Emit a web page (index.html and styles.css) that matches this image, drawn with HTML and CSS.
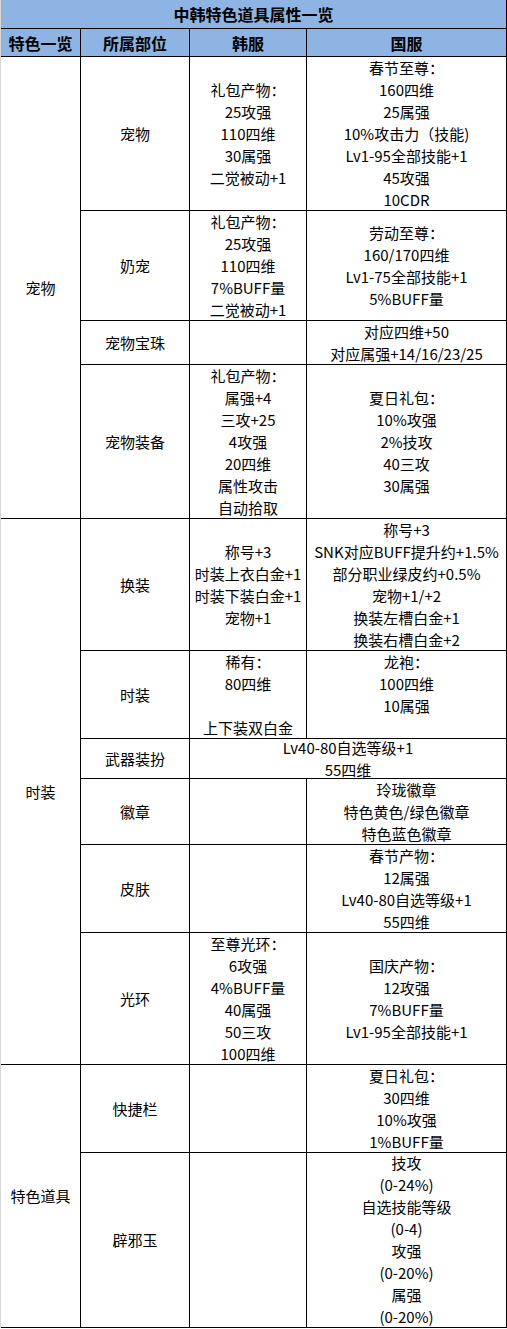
FILE: index.html
```html
<!DOCTYPE html>
<html lang="zh-CN">
<head>
<meta charset="utf-8">
<title>中韩特色道具属性一览</title>
<link rel="stylesheet" href="styles.css">
</head>
<body>
<div class="sheet">
  <div class="c title">中韩特色道具属性一览</div>
  <div class="c head">特色一览</div>
  <div class="c head">所属部位</div>
  <div class="c head">韩服</div>
  <div class="c head">国服</div>

  <div class="c grp span4">宠物</div>
  <div class="c">宠物</div>
  <div class="c">礼包产物：<br>25攻强<br>110四维<br>30属强<br>二觉被动+1</div>
  <div class="c">春节至尊：<br>160四维<br>25属强<br>10%攻击力（技能)<br>Lv1-95全部技能+1<br>45攻强<br>10CDR</div>

  <div class="c">奶宠</div>
  <div class="c">礼包产物：<br>25攻强<br>110四维<br>7%BUFF量<br>二觉被动+1</div>
  <div class="c">劳动至尊：<br>160/170四维<br>Lv1-75全部技能+1<br>5%BUFF量</div>

  <div class="c">宠物宝珠</div>
  <div class="c"></div>
  <div class="c">对应四维+50<br>对应属强+14/16/23/25</div>

  <div class="c">宠物装备</div>
  <div class="c">礼包产物：<br>属强+4<br>三攻+25<br>4攻强<br>20四维<br>属性攻击<br>自动拾取</div>
  <div class="c">夏日礼包：<br>10%攻强<br>2%技攻<br>40三攻<br>30属强</div>

  <div class="c grp span6">时装</div>
  <div class="c">换装</div>
  <div class="c">称号+3<br>时装上衣白金+1<br>时装下装白金+1<br>宠物+1</div>
  <div class="c">称号+3<br>SNK对应BUFF提升约+1.5%<br>部分职业绿皮约+0.5%<br>宠物+1/+2<br>换装左槽白金+1<br>换装右槽白金+2</div>

  <div class="c">时装</div>
  <div class="c">稀有：<br>80四维<br><br>上下装双白金</div>
  <div class="c">龙袍：<br>100四维<br>10属强<br>&nbsp;</div>

  <div class="c">武器装扮</div>
  <div class="c wide">Lv40-80自选等级+1<br>55四维</div>

  <div class="c">徽章</div>
  <div class="c"></div>
  <div class="c">玲珑徽章<br>特色黄色/绿色徽章<br>特色蓝色徽章</div>

  <div class="c">皮肤</div>
  <div class="c"></div>
  <div class="c">春节产物：<br>12属强<br>Lv40-80自选等级+1<br>55四维</div>

  <div class="c">光环</div>
  <div class="c">至尊光环：<br>6攻强<br>4%BUFF量<br>40属强<br>50三攻<br>100四维</div>
  <div class="c">国庆产物：<br>12攻强<br>7%BUFF量<br>Lv1-95全部技能+1</div>

  <div class="c grp span2">特色道具</div>
  <div class="c">快捷栏</div>
  <div class="c"></div>
  <div class="c">夏日礼包：<br>30四维<br>10%攻强<br>1%BUFF量</div>

  <div class="c">辟邪玉</div>
  <div class="c"></div>
  <div class="c">技攻<br>(0-24%)<br>自选技能等级<br>(0-4)<br>攻强<br>(0-20%)<br>属强<br>(0-20%)</div>
</div>
</body>
</html>
```

FILE: styles.css
```css
html, body {
  margin: 0;
  padding: 0;
  background: #ffffff;
}

.sheet {
  display: grid;
  width: 507px;
  box-sizing: border-box;
  border-left: 1px solid #d6d6d6;
  grid-template-columns: 80px 109px 117px 200px;
  grid-template-rows: 29px 28px 154px 110px 44px 154px 132px 88px 40px 66px 88px 132px 88px 175px;
  font-family: "Noto Sans CJK SC", "Microsoft YaHei", sans-serif;
  font-size: 15px;
  line-height: 22px;
  color: #000;
}

.c {
  box-sizing: border-box;
  border-right: 1px solid #000;
  border-bottom: 1px solid #000;
  display: flex;
  align-items: center;
  justify-content: center;
  text-align: center;
  white-space: nowrap;
  min-width: 0;
  min-height: 0;
}

.title {
  grid-column: 1 / 5;
  background: #8db4e2;
  font-weight: bold;
  font-size: 16px;
}

.head {
  background: #8db4e2;
  font-weight: bold;
  font-size: 16px;
}

.span4 { grid-row: span 4; }
.span6 { grid-row: span 6; }
.span2 { grid-row: span 2; }
.wide { grid-column: span 2; }
```
